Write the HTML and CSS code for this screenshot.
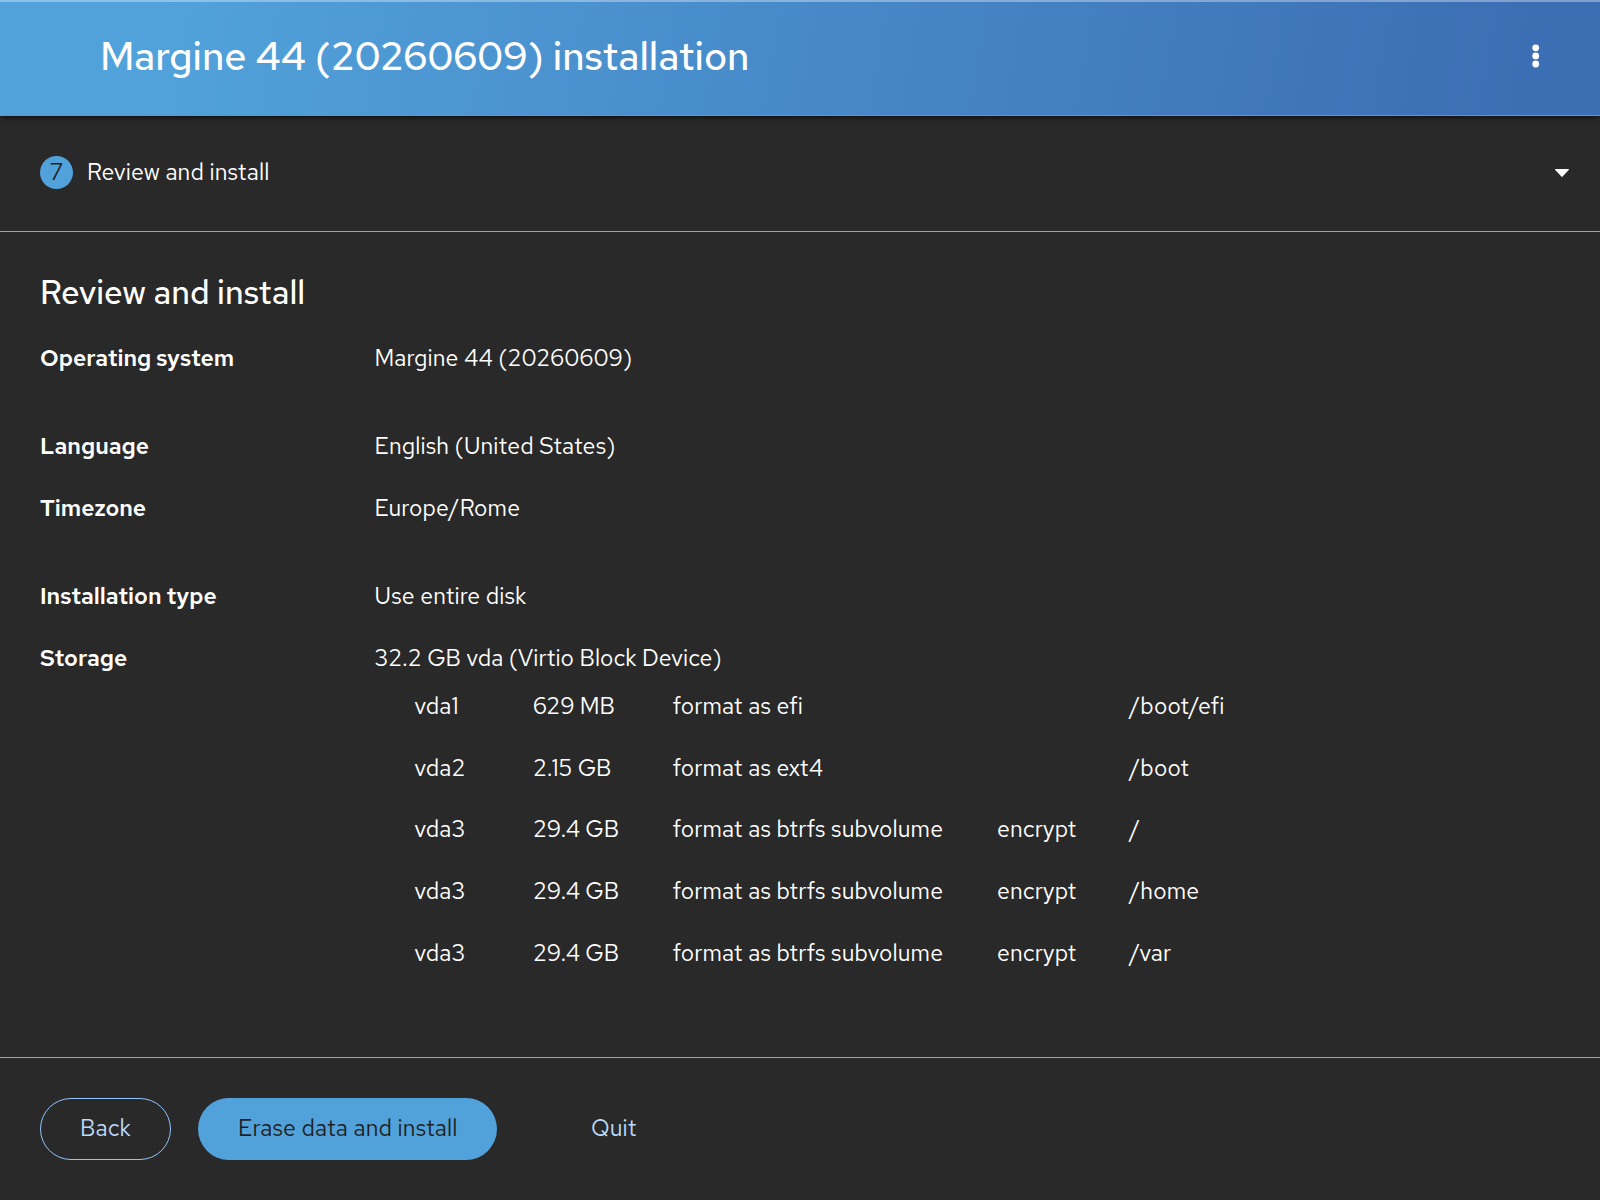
FILE: index.html
```
<!DOCTYPE html>
<html lang="en">
<head>
    <meta charset="UTF-8">
    <meta name="viewport" content="width=device-width, initial-scale=1.0">
    <title>Margine 44 (20260609) installation</title>
    <link rel="stylesheet" href="styles.css">
</head>
<body>
    <div class="installer">
        <header class="header">
            <h1>Margine 44 (20260609) installation</h1>
            <button class="menu-toggle" aria-label="Menu">
                <svg width="8" height="24" viewBox="0 0 8 24" fill="currentColor">
                    <circle cx="3.7" cy="3.8" r="3.4"/>
                    <circle cx="3.7" cy="11.9" r="3.4"/>
                    <circle cx="3.7" cy="20" r="3.4"/>
                </svg>
            </button>
        </header>

        <button class="step-toggle">
            <span class="step-number">7</span>
            <span class="step-name">Review and install</span>
            <svg class="caret" width="14" height="8" viewBox="0 0 14 8" fill="currentColor">
                <path d="M.5 0h13c.5 0 .6.7.2 1.1L7.6 7.6a.8.8 0 0 1-1.2 0L.3 1.1C-.1.7 0 0 .5 0z"/>
            </svg>
        </button>

        <main class="content">
            <h2>Review and install</h2>

            <dl class="group">
                <dt>Operating system</dt>
                <dd>Margine 44 (20260609)</dd>
            </dl>

            <dl class="group">
                <dt>Language</dt>
                <dd>English (United States)</dd>
                <dt>Timezone</dt>
                <dd>Europe/Rome</dd>
            </dl>

            <dl class="group">
                <dt>Installation type</dt>
                <dd>Use entire disk</dd>
                <dt>Storage</dt>
                <dd>
                    <div class="disk">32.2 GB vda (Virtio Block Device)</div>
                    <div class="partitions">
                        <span>vda1</span><span class="size">629 MB</span><span>format as efi</span><span></span><span>/boot/efi</span>
                        <span>vda2</span><span class="size">2.15 GB</span><span>format as ext4</span><span></span><span>/boot</span>
                        <span>vda3</span><span class="size">29.4 GB</span><span>format as btrfs subvolume</span><span>encrypt</span><span>/</span>
                        <span>vda3</span><span class="size">29.4 GB</span><span>format as btrfs subvolume</span><span>encrypt</span><span>/home</span>
                        <span>vda3</span><span class="size">29.4 GB</span><span>format as btrfs subvolume</span><span>encrypt</span><span>/var</span>
                    </div>
                </dd>
            </dl>
        </main>

        <footer class="footer">
            <button class="btn btn-secondary">Back</button>
            <button class="btn btn-primary">Erase data and install</button>
            <button class="btn btn-link">Quit</button>
        </footer>
    </div>
</body>
</html>
```
FILE: styles.css
```
* {
    margin: 0;
    padding: 0;
    box-sizing: border-box;
}

body {
    font-family: "Red Hat Text", Inter, sans-serif;
    font-size: 23px;
    font-weight: 400;
    line-height: 34px;
    letter-spacing: 0.14px;
    color: #fff;
    background: #292929;
}

button {
    font: inherit;
    letter-spacing: inherit;
    color: inherit;
    background: none;
    border: none;
    cursor: pointer;
}

svg {
    display: block;
}

.installer {
    display: flex;
    flex-direction: column;
    height: 100vh;
}

.header {
    display: flex;
    justify-content: space-between;
    align-items: center;
    height: 116px;
    padding: 0 60px 6px 100px;
    border-top: 2px solid rgba(255, 255, 255, 0.35);
    border-bottom: 1px solid #8a8d90;
    background: linear-gradient(100deg, #51a2db 0%, #51a2db 10%, #3c6eb4 95%) border-box;
    box-shadow: 0 3px 6px -2px rgba(0, 0, 0, 0.8);
}

.header h1 {
    font-size: 39.4px;
    font-weight: 500;
    line-height: 50px;
    letter-spacing: 0;
}

.step-toggle {
    display: flex;
    align-items: center;
    height: 116px;
    padding: 0 31px 2px 40px;
    border-bottom: 1px solid #a3a3a3;
}

.step-number {
    width: 33px;
    height: 33px;
    margin-right: 14px;
    border-radius: 50%;
    line-height: 33px;
    text-align: center;
    color: #1f1f1f;
    background: #51a2db;
}

.step-name {
    padding-bottom: 2px;
}

.caret {
    margin-left: auto;
}

.content {
    flex: 1;
    padding: 40px 40px 0;
}

.content h2 {
    margin-bottom: 27px;
    font-size: 32.9px;
    font-weight: 500;
    line-height: 42px;
    letter-spacing: 0;
}

.group {
    display: grid;
    grid-template-columns: 334.5px 1fr;
    row-gap: 28px;
    margin-bottom: 54px;
}

.group dt {
    font-weight: 600;
    letter-spacing: 0;
}

.disk {
    letter-spacing: 0.07px;
}

.partitions {
    display: grid;
    grid-template-columns: 118.5px 139.5px 324.5px 132.5px auto;
    row-gap: 27.7px;
    justify-content: start;
    margin-top: 14px;
    padding-left: 40px;
}

.size {
    letter-spacing: 0;
}

.footer {
    display: flex;
    height: 143px;
    padding: 40px;
    border-top: 1px solid #a3a3a3;
}

.btn {
    height: 62px;
    padding: 0 40px 2px;
    border-radius: 31px;
    white-space: nowrap;
}

.btn-secondary {
    width: 131px;
    margin-right: 27px;
    padding: 0 0 2px;
    border: 1px solid #92c5f9;
    color: #b9dafc;
}

.btn-primary {
    width: 299px;
    margin-right: 54px;
    color: #1f1f1f;
    background: #51a2db;
}

.btn-link {
    color: #b9dafc;
}
```
